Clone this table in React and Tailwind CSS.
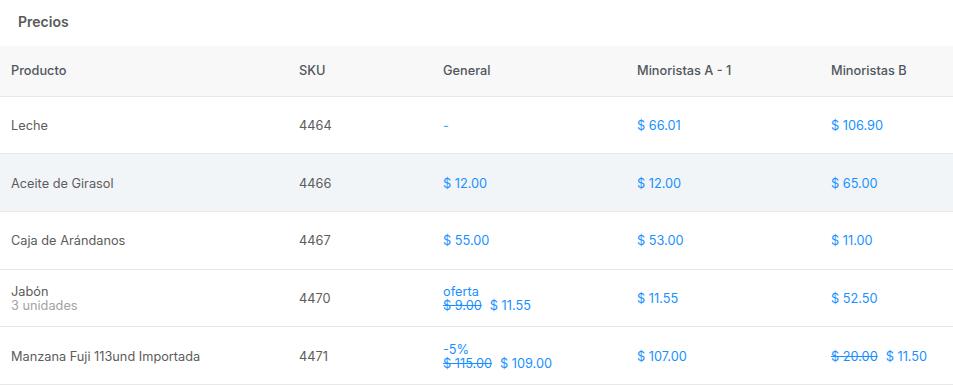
const rows = [
    { name: "Leche", sku: "4464", general: { dash: true }, a: { price: "$ 66.01" }, b: { price: "$ 106.90" } },
    { name: "Aceite de Girasol", sku: "4466", general: { price: "$ 12.00" }, a: { price: "$ 12.00" }, b: { price: "$ 65.00" }, hover: true },
    { name: "Caja de Arándanos", sku: "4467", general: { price: "$ 55.00" }, a: { price: "$ 53.00" }, b: { price: "$ 11.00" } },
    { name: "Jabón", sub: "3 unidades", sku: "4470", general: { label: "oferta", old: "$ 9.00", price: "$ 11.55" }, a: { price: "$ 11.55" }, b: { price: "$ 52.50" } },
    { name: "Manzana Fuji 113und Importada", sku: "4471", general: { label: "-5%", old: "$ 115.00", price: "$ 109.00" }, a: { price: "$ 107.00" }, b: { old: "$ 20.00", price: "$ 11.50" } },
];

const Price = ({ p }) => {
    if (p.dash) return <div className="leading-[14px] text-[#4aa8ff] font-medium">-</div>;
    return (
        <div className="text-[#1890ff] leading-[14px]">
            {p.label && <div>{p.label}</div>}
            <div>
                {p.old && <span className="line-through mr-2">{p.old}</span>}
                <span>{p.price}</span>
            </div>
        </div>
    );
};

export default function App() {
    return (
        <div className="w-[953px] h-[385px] overflow-hidden bg-white font-['Inter',sans-serif] text-[12.75px] text-[#5c5c5c]">
            <div className="h-[46px] pl-[18px] pt-[11px] text-[14px] font-semibold text-[#595959]">Precios</div>
            <table className="w-full border-collapse">
                <thead>
                    <tr className="bg-[#f8f8f8] h-[50px] text-left text-[#51575d] border-b border-[#e8e8e8]">
                        <th className="w-[288px] pl-[11px] font-medium">Producto</th>
                        <th className="w-[144px] pl-[11px] font-medium">SKU</th>
                        <th className="w-[194px] pl-[11px] font-medium">General</th>
                        <th className="w-[194px] pl-[11px] font-medium">Minoristas A - 1</th>
                        <th className="pl-[11px] font-medium">Minoristas B</th>
                    </tr>
                </thead>
                <tbody>
                    {rows.map((r, i) => (
                        <tr key={i} className={`h-[57.7px] border-b border-[#e8e8e8] ${r.hover ? "bg-[#f2f5f8]" : ""}`}>
                            <td className="pl-[11px] pt-[2px]">
                                <div className="leading-[14px]">{r.name}</div>
                                {r.sub && <div className="leading-[14px] text-[#a3a3a3]">{r.sub}</div>}
                            </td>
                            <td className="pl-[11px] pt-[2px]"><div className="leading-[14px]">{r.sku}</div></td>
                            <td className="pl-[11px] pt-[2px]"><Price p={r.general} /></td>
                            <td className="pl-[11px] pt-[2px]"><Price p={r.a} /></td>
                            <td className="pl-[11px] pt-[2px]"><Price p={r.b} /></td>
                        </tr>
                    ))}
                </tbody>
            </table>
        </div>
    );
}
